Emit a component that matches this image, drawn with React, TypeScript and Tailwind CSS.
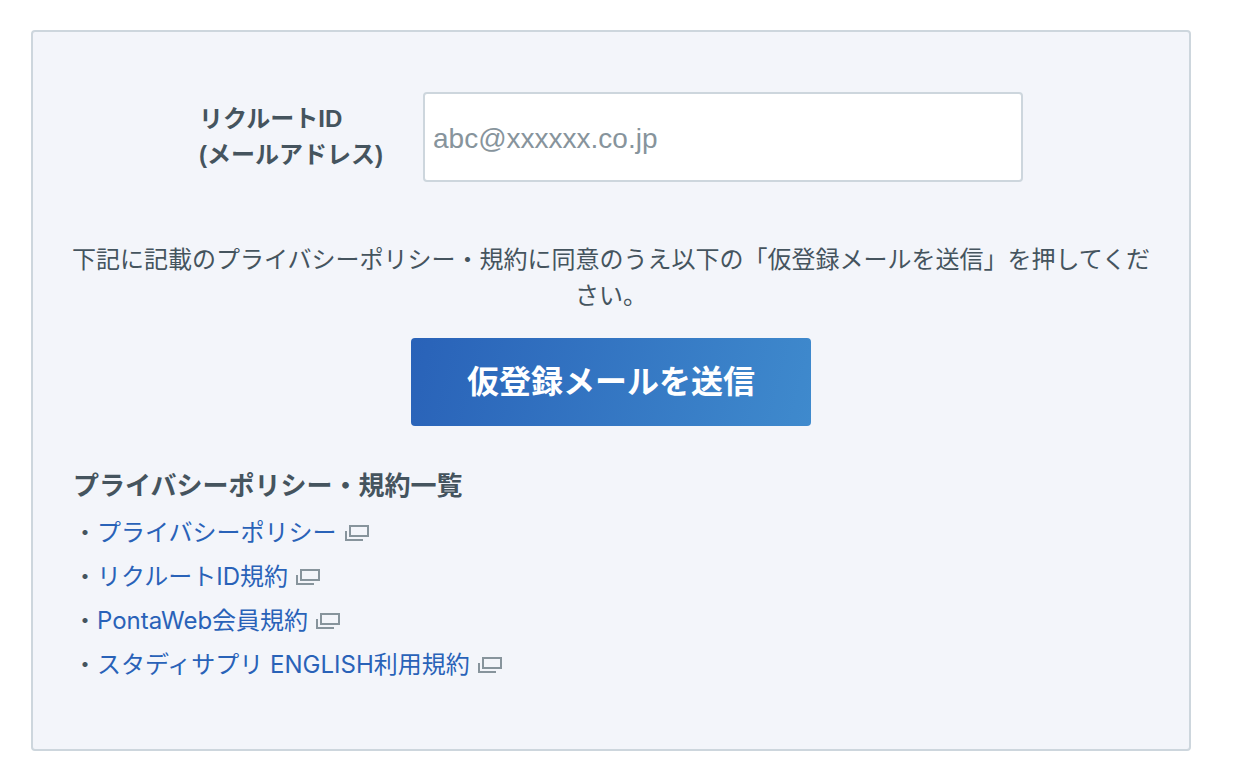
const policies = [
  "プライバシーポリシー",
  "リクルートID規約",
  "PontaWeb会員規約",
  "スタディサプリ ENGLISH利用規約",
];

function NewWindowIcon() {
  return (
    <svg width="24" height="16" viewBox="0 0 24 16" fill="none" stroke="#87949c" strokeWidth="2" aria-hidden="true">
      <path d="M5 1h18v10H5z" />
      <path d="M1 6v9h17" />
    </svg>
  );
}

export default function App() {
  return (
    <main className="bg-white pt-[30px] pr-[49px] pb-8 pl-[31px] font-[Inter,'Noto_Sans_CJK_JP',sans-serif] text-2xl leading-9 text-[#45545e]">
      <form
        className="rounded border-2 border-[#cdd6dd] bg-[#f3f5fa] px-[38px] pt-15 pb-[62px]"
        onSubmit={(e) => e.preventDefault()}
      >
        <div className="flex items-center justify-center gap-10 font-['Liberation_Sans','Noto_Sans_CJK_JP',sans-serif]">
          <label htmlFor="email" className="font-bold leading-9">
            リクルートID
            <br />
            (メールアドレス)
          </label>
          <input
            id="email"
            type="email"
            placeholder="abc@xxxxxx.co.jp"
            className="h-[90px] w-[600px] rounded border-2 border-[#cdd6dd] bg-white px-2 pt-1 text-[28px] placeholder:text-[#87949c]"
          />
        </div>
        <p className="mt-15 text-center">
          下記に記載のプライバシーポリシー・規約に同意のうえ以下の「仮登録メールを送信」を押してください。
        </p>
        <div className="mt-6 flex justify-center">
          <button
            type="submit"
            className="h-22 w-100 rounded bg-[linear-gradient(105deg,#2962b8,#3f8acd)] text-[32px] font-bold text-white"
          >
            仮登録メールを送信
          </button>
        </div>
        <section className="mt-[42px] px-0.5">
          <h2 className="text-[26px] leading-9 font-bold">プライバシーポリシー・規約一覧</h2>
          <ul className="mt-[7px]">
            {policies.map((name) => (
              <li key={name} className="flex h-11 items-center">
                <span>・</span>
                <a href="#" className="flex items-center gap-2 text-[#2962b8]">
                  {name}
                  <NewWindowIcon />
                </a>
              </li>
            ))}
          </ul>
        </section>
      </form>
    </main>
  );
}
